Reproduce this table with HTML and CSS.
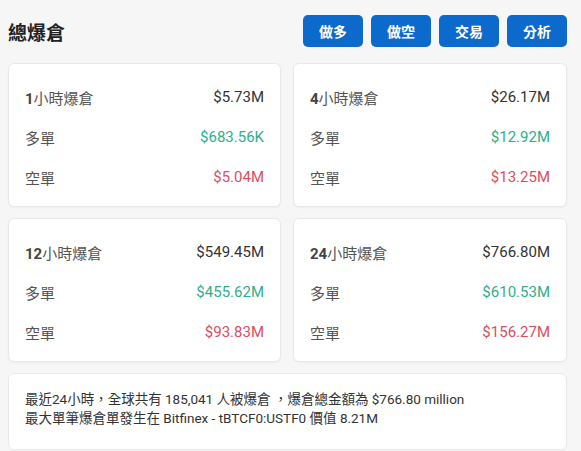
FILE: index.html
```html
<!DOCTYPE html>
<html lang="zh-Hant">
<head>
<meta charset="utf-8">
<link rel="stylesheet" href="styles.css">
</head>
<body>
<div class="page">
  <div class="header">
    <h1 class="title">總爆倉</h1>
    <div class="actions">
      <button class="btn">做多</button>
      <button class="btn">做空</button>
      <button class="btn">交易</button>
      <button class="btn">分析</button>
    </div>
  </div>
  <div class="grid">
    <div class="card">
      <div class="row"><span class="label"><b>1</b>小時爆倉</span><span class="val">$5.73M</span></div>
      <div class="row"><span class="label">多單</span><span class="val up">$683.56K</span></div>
      <div class="row"><span class="label">空單</span><span class="val down">$5.04M</span></div>
    </div>
    <div class="card">
      <div class="row"><span class="label"><b>4</b>小時爆倉</span><span class="val">$26.17M</span></div>
      <div class="row"><span class="label">多單</span><span class="val up">$12.92M</span></div>
      <div class="row"><span class="label">空單</span><span class="val down">$13.25M</span></div>
    </div>
    <div class="card">
      <div class="row"><span class="label"><b>12</b>小時爆倉</span><span class="val">$549.45M</span></div>
      <div class="row"><span class="label">多單</span><span class="val up">$455.62M</span></div>
      <div class="row"><span class="label">空單</span><span class="val down">$93.83M</span></div>
    </div>
    <div class="card">
      <div class="row"><span class="label"><b>24</b>小時爆倉</span><span class="val">$766.80M</span></div>
      <div class="row"><span class="label">多單</span><span class="val up">$610.53M</span></div>
      <div class="row"><span class="label">空單</span><span class="val down">$156.27M</span></div>
    </div>
  </div>
  <div class="summary">
    <p>最近24小時，全球共有 185,041 人被爆倉 ，爆倉總金額為 $766.80 million</p>
    <p>最大單筆爆倉單發生在 Bitfinex - tBTCF0:USTF0 價值 8.21M</p>
  </div>
</div>
</body>
</html>
```
FILE: styles.css
```css
* { box-sizing: border-box; }
html, body { margin: 0; padding: 0; }
body {
  background: #f6f6f6;
  font-family: Roboto, "Noto Sans CJK TC", sans-serif;
  color: #333;
}
.page {
  width: 559px;
  margin-left: 8px;
  padding-top: 15px;
}
.header {
  display: flex;
  justify-content: space-between;
  align-items: center;
  height: 32px;
}
.title {
  margin: 0;
  font-size: 19px;
  font-weight: 700;
  color: #222;
  font-family: "Noto Sans CJK TC", sans-serif;
}
.actions { display: flex; gap: 8px; }
.btn {
  width: 60px;
  height: 32px;
  border: none;
  border-radius: 5px;
  background: #0b6acb;
  color: #fff;
  font-family: "Noto Sans CJK TC", sans-serif;
  font-weight: 700;
  font-size: 14px;
  padding: 0;
}
.grid {
  margin-top: 16px;
  display: grid;
  grid-template-columns: 273px 274px;
  column-gap: 12px;
  row-gap: 11px;
}
.card {
  background: #fff;
  border: 1px solid #e9e9e9;
  border-radius: 6px;
  box-shadow: 0 1px 2px rgba(0,0,0,0.04);
  padding: 13px 16px 9px 16px;
}
.row {
  display: flex;
  justify-content: space-between;
  align-items: center;
  height: 40px;
  font-size: 15px;
}
.label { color: #555; font-family: "Noto Sans CJK TC", sans-serif; }
.label b { font-family: Roboto, sans-serif; font-weight: 700; color: #444; }
.val { color: #333; font-family: Roboto, sans-serif; }
.up { color: #2fae8b; }
.down { color: #de4c5f; }
.summary {
  margin-top: 11px;
  background: #fff;
  border: 1px solid #e9e9e9;
  border-radius: 6px;
  padding: 16px 16px 21px 16px;
  font-size: 13.5px;
  color: #333;
}
.summary p { margin: 0; line-height: 19px; }
```
